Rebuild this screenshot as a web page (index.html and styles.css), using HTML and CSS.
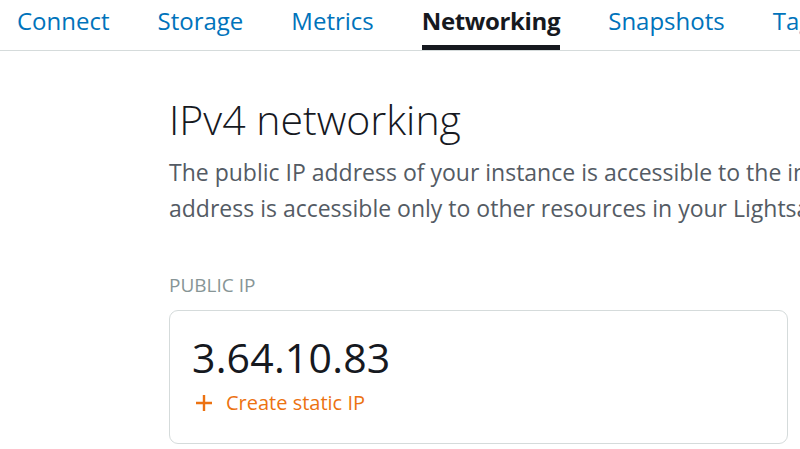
FILE: index.html
```html
<!DOCTYPE html>
<html>
<head>
<meta charset="utf-8">
<link rel="stylesheet" href="styles.css">
</head>
<body>
<nav class="tabs">
  <a class="tab">Connect</a>
  <a class="tab">Storage</a>
  <a class="tab">Metrics</a>
  <a class="tab active">Networking</a>
  <a class="tab">Snapshots</a>
  <a class="tab">Tags</a>
</nav>
<main class="content">
  <h1 class="title">IPv4 networking</h1>
  <p class="desc">The public IP address of your instance is accessible to the internet. The private IP<br>address is accessible only to other resources in your Lightsail account.</p>
  <div class="label">PUBLIC IP</div>
  <div class="card">
    <div class="ip">3.64.10.83</div>
    <a class="action"><svg class="plus" width="18" height="18" viewBox="0 0 18 18"><path d="M9 1v16M1 9h16" stroke="#ec7211" stroke-width="2.4" fill="none"/></svg><span>Create static IP</span></a>
  </div>
</main>
</body>
</html>
```
FILE: styles.css
```css
html, body {
  margin: 0;
  padding: 0;
  background: #fff;
  overflow: hidden;
  width: 800px;
  height: 449px;
}
body {
  font-family: "Open Sans", "Noto Sans", sans-serif;
  color: #16191f;
}
.tabs {
  display: flex;
  gap: 48px;
  padding-left: 17px;
  height: 50px;
  border-bottom: 1px solid #d5dbdb;
  white-space: nowrap;
  overflow: hidden;
}
.tab {
  font-size: 24px;
  color: #0073bb;
  line-height: 41px;
  height: 45px;
  flex: none;
}
.tab.active {
  color: #16191f;
  font-weight: 700;
  letter-spacing: -0.35px;
  border-bottom: 5px solid #16191f;
  height: 45px;
}
.content {
  padding-left: 169px;
  overflow: hidden;
}
.title {
  margin: 43px 0 0 0;
  font-size: 41px;
  font-weight: 300;
  line-height: 50px;
  color: #16191f;
}
.desc {
  margin: 10px 0 0 0;
  font-size: 23px;
  line-height: 36px;
  color: #545b64;
  white-space: nowrap;
}
.label {
  margin-top: 47px;
  font-size: 19px;
  line-height: 24px;
  color: #879596;
}
.card {
  margin-top: 13px;
  width: 619px;
  height: 134px;
  box-sizing: border-box;
  border: 1px solid #d5dbdb;
  border-radius: 9px;
  padding: 22px 22px;
}
.ip {
  font-size: 41px;
  line-height: 48px;
  letter-spacing: 0.2px;
}
.action {
  display: flex;
  align-items: center;
  gap: 13px;
  color: #ec7211;
  font-size: 20px;
  line-height: 26px;
  margin-top: 9px;
  padding-left: 3px;
}
.plus {
  flex: none;
}
```
